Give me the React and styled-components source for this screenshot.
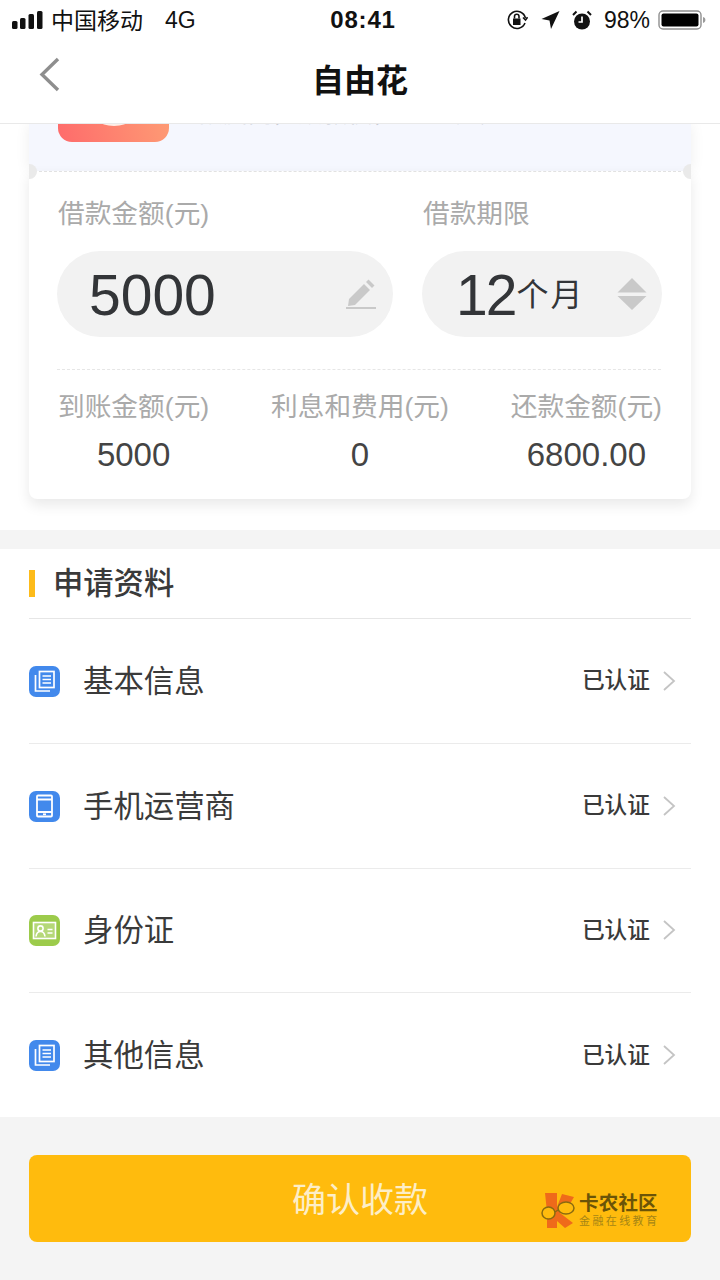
import React from "react";
import styled, { createGlobalStyle } from "styled-components";

const FONT = `"Liberation Sans", "Noto Sans CJK SC", sans-serif`;

const Global = createGlobalStyle`
  html, body { margin: 0; padding: 0; background: #fff; }
  body { font-family: ${FONT}; }
  * { box-sizing: border-box; }
`;

const Page = styled.div`
  width: 720px;
  height: 1280px;
  overflow: hidden;
  background: #f4f4f4;
  display: flex;
  flex-direction: column;
`;

const Header = styled.header`
  position: relative;
  z-index: 1;
  height: 124px;
  background: #fff;
  border-bottom: 1px solid #e9e9e9;
  display: flex;
  flex-direction: column;
`;

const StatusBar = styled.div`
  height: 40px;
  padding: 0 12px;
  display: grid;
  grid-template-columns: 1fr auto 1fr;
  align-items: center;
  color: #111;
  font-size: 23px;
`;

const StatusLeft = styled.div`
  display: flex;
  align-items: center;
`;

const Carrier = styled.span`
  margin-left: 8px;
  width: 114px;
  padding-bottom: 3px;
`;

const Network = styled.span`
  padding-bottom: 0;
`;

const Clock = styled.div`
  padding-left: 6px;
  font-size: 24px;
  font-weight: 700;
  letter-spacing: 0.8px;
`;

const StatusRight = styled.div`
  display: flex;
  align-items: center;
  justify-content: flex-end;
  padding-right: 2px;
`;

const StatusGlyph = styled.svg`
  margin-left: ${(p) => p.$ml || 0}px;
`;

const Percent = styled.span`
  margin: 0 8px 0 12px;
  font-size: 23px;
`;

const NavBar = styled.div`
  position: relative;
  flex: 1;
  display: flex;
  align-items: center;
  justify-content: center;
`;

const Back = styled.svg`
  position: absolute;
  left: 38px;
  top: 17px;
`;

const Title = styled.h1`
  margin: 0 0 8px;
  font-size: 32px;
  font-weight: 700;
  color: #111;
`;

const Upper = styled.section`
  height: 406px;
  background: #fff;
  padding: 0 29px;
`;

const ProductStrip = styled.div`
  height: 47px;
  background: #f5f7fe;
  padding-left: 29px;
  overflow: hidden;
  display: flex;
  align-items: flex-start;
  gap: 29px;
  box-shadow: 0 0 14px rgba(0, 0, 0, 0.07);
`;

const ProductLogo = styled.div`
  position: relative;
  width: 111px;
  height: 18px;
  border-radius: 0 0 14px 14px;
  background: linear-gradient(75deg, #fe6b6b, #fe9a74);
  &::after {
    content: "";
    position: absolute;
    left: 42px;
    top: -8px;
    width: 28px;
    height: 10px;
    border-radius: 50%;
    background: #fdeee8;
  }
`;

const ProductText = styled.div`
  margin-top: -23px;
  font-size: 24px;
  line-height: 26px;
  letter-spacing: 1px;
  color: #c4c7d0;
  white-space: nowrap;
`;

const LoanCard = styled.div`
  position: relative;
  height: 328px;
  background: #fff;
  border-radius: 0 0 8px 8px;
  border-top: 1px dashed #e2e2e2;
  box-shadow: 0 6px 14px rgba(0, 0, 0, 0.09);
  padding: 0 29px 0 28px;
  display: flex;
  flex-direction: column;
`;

const Notch = styled.span`
  position: absolute;
  top: -8px;
  ${(p) =>
    p.$right
      ? "right: 0; border-radius: 8px 0 0 8px;"
      : "left: 0; border-radius: 0 8px 8px 0;"}
  width: 8px;
  height: 15px;
  background: #eaeaea;
`;

const TermGrid = styled.div`
  display: grid;
  grid-template-columns: 336px 240px;
  column-gap: 29px;
  padding-bottom: 32px;
  border-bottom: 1px dashed #e6e6e6;
  margin-right: 1px;
`;

const FieldLabel = styled.div`
  height: 79px;
  padding: 23px 0 0 1px;
  font-size: 26.7px;
  line-height: 38px;
  color: #aaa;
`;

const Pill = styled.div`
  height: 86px;
  border-radius: 43px;
  background: #f2f2f2;
  display: flex;
  align-items: center;
  position: relative;
  padding-left: ${(p) => p.$pad}px;
`;

const BigNumber = styled.span`
  padding-top: 2px;
  font-size: 57px;
  letter-spacing: ${(p) => (p.$tight ? "-2px" : "0")};
  color: #333538;
  line-height: 1;
`;

const Unit = styled.span`
  margin-left: 1px;
  padding-bottom: 4px;
  font-size: 32px;
  color: #333538;
  letter-spacing: 2px;
`;

const PillIcon = styled.svg`
  margin-left: auto;
  margin-right: ${(p) => p.$mr}px;
`;

const Summary = styled.div`
  display: flex;
  justify-content: space-between;
  padding: 17px 0 0 1px;
`;

const SummaryItem = styled.div`
  display: flex;
  flex-direction: column;
  align-items: center;
`;

const SummaryLabel = styled.div`
  font-size: 26.7px;
  line-height: 40px;
  color: #aaa;
  white-space: nowrap;
`;

const SummaryValue = styled.div`
  font-size: 33px;
  line-height: 48px;
  margin-top: 4px;
  color: #444;
`;

const Docs = styled.section`
  margin-top: 19px;
  height: 568px;
  background: #fff;
  padding: 0 29px;
`;

const DocsHead = styled.div`
  height: 70px;
  display: flex;
  align-items: center;
  gap: 19px;
  border-bottom: 1px solid #e6e6e6;
`;

const Accent = styled.span`
  width: 6px;
  height: 27px;
  margin-bottom: 1px;
  background: #fdbb1a;
`;

const DocsTitle = styled.h2`
  margin: 0 0 0 -1px;
  padding-bottom: 6px;
  font-size: 30.3px;
  font-weight: 500;
  color: #3a3a3a;
`;

const Row = styled.div`
  height: 124.75px;
  display: flex;
  align-items: center;
  border-bottom: 1px solid ${(p) => (p.$last ? "transparent" : "#ebebeb")};
`;

const RowIcon = styled.div`
  width: 31px;
  height: 31px;
  margin-top: 1px;
  border-radius: 7px;
  background: ${(p) => p.$bg};
  display: flex;
  align-items: center;
  justify-content: center;
`;

const RowLabel = styled.span`
  margin-left: 23px;
  padding-bottom: 4px;
  font-size: 30.4px;
  color: #3a3a3a;
`;

const RowStatus = styled.span`
  margin-left: auto;
  padding-bottom: 4px;
  font-size: 22.7px;
  font-weight: 500;
  color: #3a3a3a;
`;

const Chevron = styled.svg`
  margin: 0 15px 0 12px;
`;

const Footer = styled.div`
  flex: 1;
  padding: 38px 29px 0;
`;

const Confirm = styled.button`
  position: relative;
  width: 100%;
  height: 87px;
  border: 0;
  border-radius: 8px;
  background: #ffbb0d;
  color: #fdeec7;
  font-family: ${FONT};
  font-size: 34px;
  padding: 0 0 2px;
`;

const Watermark = styled.div`
  position: absolute;
  left: 512px;
  top: 37px;
  display: flex;
  align-items: center;
  gap: 3px;
`;

const MarkText = styled.div`
  display: flex;
  flex-direction: column;
  align-items: flex-start;
`;

const MarkMain = styled.span`
  font-size: 19.5px;
  line-height: 21px;
  font-weight: 700;
  color: #6b5408;
  letter-spacing: 0.2px;
`;

const MarkSub = styled.span`
  font-size: 11px;
  line-height: 14px;
  letter-spacing: 2.4px;
  color: #a58516;
  white-space: nowrap;
`;

const BookIcon = () => (
  <svg width="23" height="23" viewBox="0 0 23 23" fill="none" stroke="#fff" strokeWidth="1.7">
    <rect x="6.5" y="1.5" width="14.5" height="16" />
    <path d="M2.5 5v16H17" />
    <path d="M9.5 6h8.5M9.5 9.5h8.5M9.5 13h8.5" />
  </svg>
);

const PhoneIcon = () => (
  <svg width="19" height="24" viewBox="0 0 19 24" fill="none" stroke="#fff" strokeWidth="1.8">
    <rect x="2" y="1.5" width="15" height="21" rx="1" />
    <path d="M2 5.5h15M2 18h15" />
    <path d="M8 20.3h3" />
  </svg>
);

const CardIcon = () => (
  <svg width="25" height="19" viewBox="0 0 25 19" fill="none" stroke="#fff" strokeWidth="1.6">
    <rect x="1.5" y="1.5" width="22" height="16" fill="#fff" fillOpacity="0.25" />
    <circle cx="8.5" cy="7.5" r="2.6" />
    <path d="M4 15.500c.4-3.500 2.200-5 4.500-5s4.100 1.500 4.500 5" />
    <path d="M15.500 8.500h5M15.500 12h5" />
  </svg>
);

const docs = [
  { label: "基本信息", bg: "#4289ec", Icon: BookIcon },
  { label: "手机运营商", bg: "#4289ec", Icon: PhoneIcon },
  { label: "身份证", bg: "#9ccb4b", Icon: CardIcon },
  { label: "其他信息", bg: "#4289ec", Icon: BookIcon },
];

const summary = [
  ["到账金额(元)", "5000"],
  ["利息和费用(元)", "0"],
  ["还款金额(元)", "6800.00"],
];

export default function App() {
  return (
    <Page>
      <Global />
      <Header>
        <StatusBar>
          <StatusLeft>
            <svg width="31" height="20" viewBox="0 0 31 20" fill="#111">
              <rect x="0" y="11" width="5.5" height="8" rx="1.5" />
              <rect x="8" y="8" width="5.5" height="11" rx="1.5" />
              <rect x="16.5" y="4" width="5.5" height="15" rx="1.5" />
              <rect x="25" y="1" width="5.5" height="18" rx="1.5" />
            </svg>
            <Carrier>中国移动</Carrier>
            <Network>4G</Network>
          </StatusLeft>
          <Clock>08:41</Clock>
          <StatusRight>
            <svg width="22" height="22" viewBox="0 0 22 22" fill="none" stroke="#111" strokeWidth="1.6">
              <path d="M19 14A8.6 8.6 0 1 1 19.4 9" />
              <path d="M17 8.5l2.5 2.5 2-2.8" />
              <rect x="7" y="9.5" width="7.5" height="6.5" fill="#111" stroke="none" />
              <path d="M8.5 9.5V7.5a2.2 2.2 0 0 1 4.5 0v2" />
            </svg>
            <StatusGlyph $ml={13} width="19" height="20" viewBox="0 0 19 20" fill="#111">
              <path d="M18.5 1L10 19l-1.5-8.5L0.5 9z" />
            </StatusGlyph>
            <StatusGlyph $ml={12} width="20" height="21" viewBox="0 0 20 21" fill="none">
              <circle cx="10" cy="11.5" r="8" fill="#111" />
              <path d="M10 6.5v5.500H6.5" stroke="#fff" strokeWidth="1.7" />
              <path d="M1 5l3.5-3.500M19 5l-3.500-3.500" stroke="#111" strokeWidth="2" />
            </StatusGlyph>
            <Percent>98%</Percent>
            <svg width="48" height="22" viewBox="0 0 48 22" fill="none">
              <rect x="1" y="2" width="42" height="18" rx="4" stroke="#8f8f8f" strokeWidth="1.4" />
              <rect x="3.5" y="4.5" width="37" height="13" rx="2" fill="#000" />
              <path d="M45 8v6c1.600-.4 2.400-1.600 2.400-3S46.600 8.400 45 8z" fill="#9a9a9a" />
            </svg>
          </StatusRight>
        </StatusBar>
        <NavBar>
          <Back width="24" height="36" viewBox="0 0 24 36" fill="none" stroke="#8e8e8e" strokeWidth="3.4">
            <path d="M20 2L4 17.500 20 33" />
          </Back>
          <Title>自由花</Title>
        </NavBar>
      </Header>

      <Upper>
        <ProductStrip>
          <ProductLogo />
          <ProductText>额度高，放款快，1000元起</ProductText>
        </ProductStrip>
        <LoanCard>
          <Notch />
          <Notch $right />
          <TermGrid>
            <div>
              <FieldLabel>借款金额(元)</FieldLabel>
              <Pill $pad={32}>
                <BigNumber>5000</BigNumber>
                <PillIcon $mr={16} width="32" height="32" viewBox="0 0 32 32" fill="#c9c9c9">
                  <path d="M4 21L19 6l6 6-15 15-7 1z" />
                  <path d="M21 4l2.500-2.500 6 6L27 10z" />
                  <rect x="1" y="29" width="30" height="2" />
                </PillIcon>
              </Pill>
            </div>
            <div>
              <FieldLabel>借款期限</FieldLabel>
              <Pill $pad={34}>
                <BigNumber $tight>12</BigNumber>
                <Unit>个月</Unit>
                <PillIcon $mr={15} width="30" height="32" viewBox="0 0 30 32" fill="#c9c9c9">
                  <path d="M15 0l14.500 14.500H0.500z" />
                  <path d="M15 32L0.500 18h29z" />
                </PillIcon>
              </Pill>
            </div>
          </TermGrid>
          <Summary>
            {summary.map(([label, value]) => (
              <SummaryItem key={label}>
                <SummaryLabel>{label}</SummaryLabel>
                <SummaryValue>{value}</SummaryValue>
              </SummaryItem>
            ))}
          </Summary>
        </LoanCard>
      </Upper>

      <Docs>
        <DocsHead>
          <Accent />
          <DocsTitle>申请资料</DocsTitle>
        </DocsHead>
        {docs.map(({ label, bg, Icon }, i) => (
          <Row key={label} $last={i === docs.length - 1}>
            <RowIcon $bg={bg}>
              <Icon />
            </RowIcon>
            <RowLabel>{label}</RowLabel>
            <RowStatus>已认证</RowStatus>
            <Chevron width="14" height="22" viewBox="0 0 14 22" fill="none" stroke="#c4c4c4" strokeWidth="1.8">
              <path d="M2 2l10 9-10 9" />
            </Chevron>
          </Row>
        ))}
      </Docs>

      <Footer>
        <Confirm>
          确认收款
          <Watermark>
            <svg width="35" height="36" viewBox="0 0 35 36">
              <path d="M4 1h12v14L21 2l12 3-7 12-7 4 13 10-8 5-8-7v7H6V20z" fill="#ef6a1a" />
              <ellipse cx="7.5" cy="21" rx="6.5" ry="6" fill="#ffbb0d" stroke="#8a6a10" strokeWidth="1.5" />
              <ellipse cx="25" cy="16" rx="8" ry="6" fill="#ffbb0d" stroke="#8a6a10" strokeWidth="1.5" />
              <path d="M14 20l3-2" stroke="#8a6a10" strokeWidth="1.5" />
            </svg>
            <MarkText>
              <MarkMain>卡农社区</MarkMain>
              <MarkSub>金融在线教育</MarkSub>
            </MarkText>
          </Watermark>
        </Confirm>
      </Footer>
    </Page>
  );
}
